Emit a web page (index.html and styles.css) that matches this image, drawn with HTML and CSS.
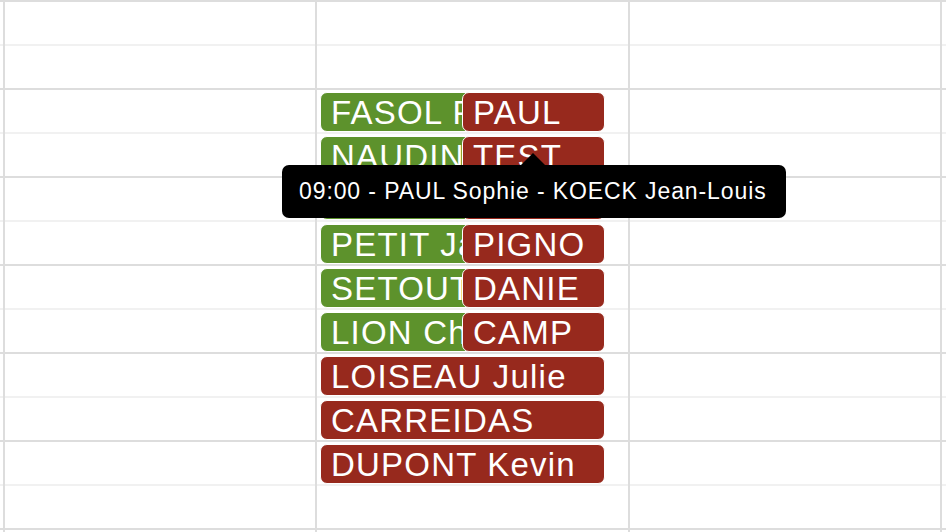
FILE: index.html
```html
<!DOCTYPE html>
<html lang="fr">
<head>
<meta charset="utf-8">
<title>Planning</title>
<link rel="stylesheet" href="styles.css">
</head>
<body>
<div class="calendar">
  <div class="slots">
    <div class="slot major"></div>
    <div class="slot minor"></div>
    <div class="slot major"></div>
    <div class="slot minor"></div>
    <div class="slot major"></div>
    <div class="slot minor"></div>
    <div class="slot major"></div>
    <div class="slot minor"></div>
    <div class="slot major"></div>
    <div class="slot minor"></div>
    <div class="slot major"></div>
    <div class="slot minor"></div>
    <div class="slot major"></div>
  </div>
  <div class="cols">
    <div class="gutter"></div>
    <div class="col"></div>
    <div class="col col-events">
      <div class="pair">
        <div class="event green">FASOL Pierre</div>
        <div class="event red narrow">PAUL Sophie</div>
      </div>
      <div class="pair">
        <div class="event green">NAUDIN Marc</div>
        <div class="event red narrow">TEST Anne</div>
      </div>
      <div class="pair">
        <div class="event green">MOREAU Luc</div>
        <div class="event red narrow">KOECK Jean</div>
      </div>
      <div class="pair">
        <div class="event green">PETIT Jacques</div>
        <div class="event red narrow">PIGNON Marc</div>
      </div>
      <div class="pair">
        <div class="event green">SETOUT Ali</div>
        <div class="event red narrow">DANIEL Paul</div>
      </div>
      <div class="pair">
        <div class="event green">LION Christine</div>
        <div class="event red narrow">CAMPANA Rose</div>
      </div>
      <div class="event red">LOISEAU Julie</div>
      <div class="event red">CARREIDAS Amandine</div>
      <div class="event red">DUPONT Kevin</div>
    </div>
    <div class="col"></div>
    <div class="col"></div>
  </div>
  <div class="tooltip">09:00 - PAUL Sophie - KOECK Jean-Louis</div>
</div>
</body>
</html>
```
FILE: styles.css
```css
html, body {
  margin: 0;
  padding: 0;
  background: #ffffff;
}

body {
  font-family: "Liberation Sans", Arial, Helvetica, sans-serif;
}

.calendar {
  position: relative;
  width: 946px;
  height: 532px;
  overflow: hidden;
}

.slots {
  display: flex;
  flex-direction: column;
}

.slot {
  height: 44px;
  box-sizing: border-box;
  flex: none;
}

.slot.major {
  border-top: 2px solid #dddddd;
}

.slot.minor {
  border-top: 2px solid #f1f1f1;
}

.cols {
  position: absolute;
  inset: 0;
  display: grid;
  grid-template-columns: 3px 312px 313px 312px 1fr;
}

.col {
  border-left: 2px solid #dddddd;
  min-width: 0;
}

.col-events {
  padding: 92px 23px 0 3px;
  display: flex;
  flex-direction: column;
  gap: 4px;
}

.pair {
  display: grid;
  grid-template-columns: 142px 1fr;
}

.pair .green {
  grid-column: 1 / 3;
  grid-row: 1;
  margin-right: 40px;
  white-space: nowrap;
}

.pair .red {
  grid-column: 2;
  grid-row: 1;
  position: relative;
  z-index: 1;
}

.event {
  box-sizing: border-box;
  height: 40px;
  border: 1px solid #ffffff;
  border-radius: 7px;
  padding: 1px 10px 0;
  color: #ffffff;
  font-size: 33px;
  letter-spacing: 1.2px;
  line-height: 38px;
  overflow: hidden;
  white-space: normal;
}

.event.green {
  background: #5d922c;
}

.event.red {
  background: #97291d;
}

.event.narrow {
  word-break: break-all;
  padding-right: 11px;
}

.tooltip {
  position: absolute;
  left: 282px;
  top: 165px;
  width: 504px;
  height: 53px;
  box-sizing: border-box;
  padding-left: 17px;
  background: #000000;
  color: #ffffff;
  border-radius: 7px;
  font-size: 23px;
  letter-spacing: 0.9px;
  line-height: 53px;
  white-space: nowrap;
  z-index: 5;
}

.tooltip::before {
  content: "";
  position: absolute;
  left: 239px;
  top: -12px;
  border-left: 12px solid transparent;
  border-right: 12px solid transparent;
  border-bottom: 12px solid #000000;
}
```
